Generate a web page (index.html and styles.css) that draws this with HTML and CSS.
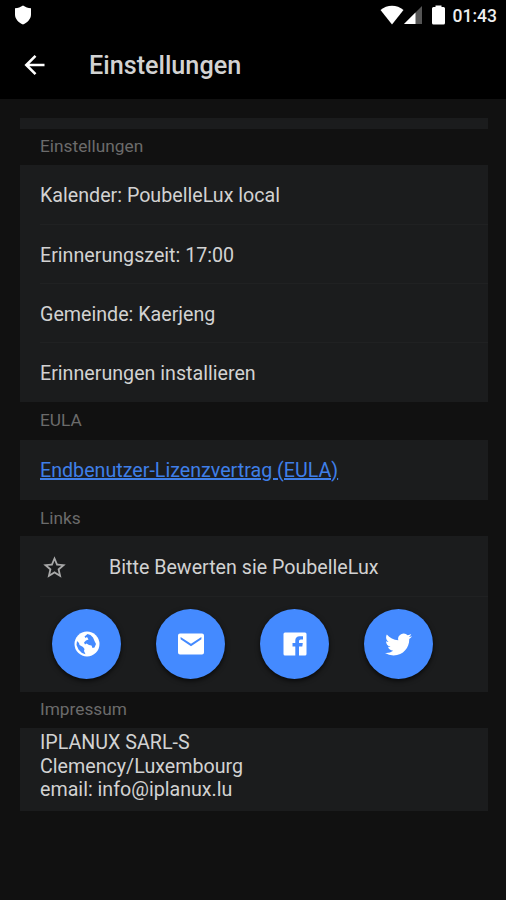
FILE: index.html
```html
<!DOCTYPE html>
<html lang="de">
<head>
    <meta charset="utf-8">
    <meta name="viewport" content="width=device-width, initial-scale=1.0">
    <title>Einstellungen</title>
    <link rel="stylesheet" href="styles.css">
</head>
<body>

<div class="header">
    <div class="status-bar">
        <svg class="shield" width="18" height="20" viewBox="0 0 18 20"><path d="M9 0.500C11.500 2.200 14 3 17 3.300V9.500C17 14 13.500 17.500 9 19.500C4.500 17.500 1 14 1 9.500V3.300C4 3 6.500 2.200 9 0.500Z"/></svg>
        <svg class="wifi" width="24" height="20" viewBox="0 0 24 20"><path d="M0.500 5C7 -0.700 17 -0.700 23.500 5L12 19.500Z"/></svg>
        <svg class="signal" width="18" height="18" viewBox="0 0 18 18"><path class="dim" d="M18 0V18H0Z"/><path d="M11.500 6.500V18H0Z"/></svg>
        <svg class="battery" width="13" height="20" viewBox="0 0 13 20"><path d="M3.500 0.500H9.500V2H11.500Q13 2 13 3.500V18Q13 19.500 11.500 19.500H1.500Q0 19.500 0 18V3.500Q0 2 1.500 2H3.500Z"/></svg>
        <span class="time">01:43</span>
    </div>
    <div class="navbar">
        <svg class="back" width="22" height="22" viewBox="0 0 22 22"><path d="M20.500 11H2.500M11.500 1.800L2.300 11L11.500 20.200"/></svg>
        <span class="title">Einstellungen</span>
    </div>
</div>

<div class="content">
    <div class="list strip"></div>

    <div class="list-header">Einstellungen</div>
    <div class="list settings">
        <div class="item"><span>Kalender: PoubelleLux local</span></div>
        <div class="item"><span>Erinnerungszeit: 17:00</span></div>
        <div class="item"><span>Gemeinde: Kaerjeng</span></div>
        <div class="item"><span>Erinnerungen installieren</span></div>
    </div>

    <div class="list-header eula">EULA</div>
    <div class="list">
        <div class="item license"><a href="#">Endbenutzer-Lizenzvertrag (EULA)</a></div>
    </div>

    <div class="list-header links">Links</div>
    <div class="list">
        <div class="item rate">
            <svg class="star" width="27" height="27" viewBox="0 0 24 24"><path d="M22 9.240l-7.190-.62L12 2 9.190 8.630 2 9.240l5.460 4.730L5.820 21 12 17.270 18.180 21l-1.630-7.030L22 9.240zM12 15.400l-3.760 2.270 1-4.280-3.320-2.880 4.380-.38L12 6.100l1.710 4.040 4.380.38-3.320 2.880 1 4.280L12 15.400z"/></svg>
            <span>Bitte Bewerten sie PoubelleLux</span>
        </div>
        <div class="buttons">
            <a class="fab" href="#">
                <svg width="26" height="26" viewBox="0 0 26 26"><circle cx="13" cy="13" r="12.500"/><path class="sea" d="M13.500 3L16.500 4L19 6.500L20.500 10L22 13L20.500 16.500L18.500 17L17.500 14.500L15 14L12.500 12.500L11 13.500L10 11.500L12 9.500L14.500 8.500L13 6L11.500 7L10.500 5.500ZM3 10L5 12L5.500 14L9 16L10.500 18L10 20L11.500 23.200L8 22L4.500 18.500L2.500 14Z"/></svg>
            </a>
            <a class="fab" href="#">
                <svg width="28" height="24" viewBox="0 0 28 24"><path fill-rule="evenodd" d="M3 1.500H25Q27 1.500 27 3.500V20.500Q27 22.500 25 22.500H3Q1 22.500 1 20.500V3.500Q1 1.500 3 1.500ZM3.600 5V7.300L14 14.200L24.400 7.300V5L14 11.800Z"/></svg>
            </a>
            <a class="fab" href="#">
                <svg width="24" height="24" viewBox="0 0 24 24"><path d="M2 0.500H22Q23.500 0.500 23.500 2V22Q23.500 23.500 22 23.500H16V14.500H19.300L19.800 11H16V9Q16 7.500 17.800 7.500H20V4.300H16.800C13.700 4.300 12.300 6 12.300 8.500V11H9.500V14.500H12.300V23.500H2Q0.500 23.500 0.500 22V2Q0.500 0.500 2 0.500Z"/></svg>
            </a>
            <a class="fab" href="#">
                <svg width="27" height="27" viewBox="0 0 24 24"><path d="M23.953 4.570a10 10 0 01-2.825.775 4.958 4.958 0 002.163-2.723c-.951.555-2.005.959-3.127 1.184a4.920 4.920 0 00-8.384 4.482C7.690 8.095 4.067 6.130 1.640 3.162a4.822 4.822 0 00-.666 2.475c0 1.710.870 3.213 2.188 4.096a4.904 4.904 0 01-2.228-.616v.06a4.923 4.923 0 003.946 4.827 4.996 4.996 0 01-2.212.085 4.936 4.936 0 004.604 3.417 9.867 9.867 0 01-6.102 2.105c-.390 0-.779-.023-1.170-.067a13.995 13.995 0 007.557 2.209c9.053 0 13.998-7.496 13.998-13.985 0-.210 0-.420-.015-.630A9.935 9.935 0 0024 4.590z"/></svg>
            </a>
        </div>
    </div>

    <div class="list-header">Impressum</div>
    <div class="list imprint">
        IPLANUX SARL-S<br>
        Clemency/Luxembourg<br>
        email: info@iplanux.lu
    </div>
</div>

</body>
</html>
```
FILE: styles.css
```css
body {
    margin: 0;
    min-height: 900px;
    background-color: #111111;
    color: #d2d2d2;
    font-family: Roboto, sans-serif;
    font-size: 19.67px;
}

svg {
    display: block;
    flex-shrink: 0;
    fill: #fff;
}

.header {
    height: 99px;
    background-color: #000;
}

.status-bar {
    display: flex;
    align-items: center;
    height: 30px;
    padding: 0 9px 0 14px;
}

.wifi {
    margin-left: auto;
}

.signal .dim {
    fill: #555;
}

.battery {
    margin: 0 8px 0 10px;
}

.time {
    color: #eee;
    font-size: 17.5px;
    font-weight: 500;
    line-height: 30px;
    padding-top: 2px;
}

.navbar {
    display: flex;
    align-items: center;
    height: 69px;
    padding-left: 24px;
}

.back {
    fill: none;
    stroke: #fff;
    stroke-width: 2.6;
}

.title {
    margin-left: 43px;
    padding-top: 1px;
    font-size: 25.2px;
    font-weight: 500;
}

.content {
    padding: 19px 18px 0 20px;
}

.list {
    background-color: #1b1c1d;
}

.strip {
    height: 11px;
}

.list-header {
    height: 36px;
    padding-left: 20px;
    color: #6b6b6b;
    font-size: 17.3px;
    line-height: 34px;
}

.eula {
    height: 38px;
    line-height: 36px;
}

.links {
    line-height: 36px;
}

.settings {
    height: 237px;
}

.item {
    display: flex;
    align-items: center;
    box-sizing: border-box;
    height: 59px;
    margin-left: 20px;
    padding-top: 2px;
    border-bottom: 1px solid #202122;
}

.settings .item:first-child {
    height: 60px;
    padding-top: 1px;
}

.item:last-child {
    border-bottom: none;
}

.license {
    height: 60px;
    padding-top: 0;
}

.license a {
    color: #3f7fe8;
    text-decoration-thickness: 2px;
}

.rate {
    height: 61px;
}

.star {
    margin: 1px 41px 0 1px;
    fill: #a8a8a8;
}

.buttons {
    display: flex;
    gap: 35px;
    box-sizing: border-box;
    height: 95px;
    padding: 12px 0 0 32px;
}

.fab {
    display: flex;
    align-items: center;
    justify-content: center;
    width: 69px;
    height: 70px;
    border-radius: 50%;
    background-color: #448aff;
    box-shadow: 0 2px 5px rgba(0, 0, 0, 0.7);
}

.fab .sea {
    fill: #448aff;
}

.imprint {
    box-sizing: border-box;
    height: 83px;
    padding: 3px 20px 0;
    line-height: 23.5px;
}
```
